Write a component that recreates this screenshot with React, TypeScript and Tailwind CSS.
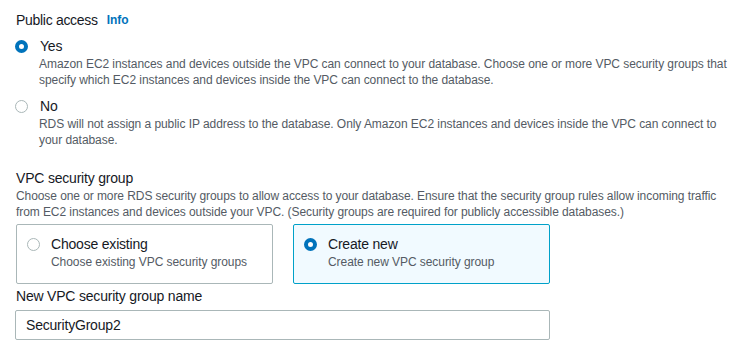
import type { ReactNode } from "react";

const font = { fontFamily: '"Liberation Sans", Arial, sans-serif' };

const Radio = ({ checked }: { checked?: boolean }) =>
    checked ? (
        <span className="box-border block size-[13px] shrink-0 rounded-full border-[4px] border-[#0073bb] bg-white" />
    ) : (
        <span className="box-border block size-[13px] shrink-0 rounded-full border border-[#aab7b8] bg-white" />
    );

interface OptionProps {
    checked?: boolean;
    label: string;
    children: ReactNode;
}

const RadioOption = ({ checked, label, children }: OptionProps) => (
    <div className="flex flex-col">
        <div className="-ml-px flex h-5 items-center gap-3">
            <Radio checked={checked} />
            <span className="text-[14px] leading-5 tracking-[-0.2px] text-[#16191f]">{label}</span>
        </div>
        <p className="pl-[23px] text-[12px] leading-4 tracking-[-0.06px] text-[#545b64]">{children}</p>
    </div>
);

const Tile = ({ checked, label, description }: { checked?: boolean; label: string; description: string }) => (
    <div
        className={
            checked
                ? "flex h-[60px] w-[257px] flex-col rounded-[2px] border border-[#00a1c9] bg-[#f1faff] pl-[10px] pt-[9px]"
                : "flex h-[60px] w-[257px] flex-col rounded-[2px] border border-[#aab7b8] bg-white pl-[10px] pt-[9px]"
        }
    >
        <div className="flex h-5 items-center gap-[11px]">
            <Radio checked={checked} />
            <span className="text-[14px] leading-5 tracking-[-0.2px] text-[#16191f]">{label}</span>
        </div>
        <p className="pl-6 text-[12px] leading-4 tracking-[-0.06px] text-[#545b64]">{description}</p>
    </div>
);

export default function App() {
    return (
        <div className="h-[346px] w-[740px] overflow-hidden bg-white pl-4 pt-[10px]" style={font}>
            <div className="flex h-5 items-center gap-[9px]">
                <span className="text-[14px] leading-5 tracking-[-0.3px] text-[#16191f]">Public access</span>
                <span className="text-[12px] font-bold leading-5 text-[#0073bb]">Info</span>
            </div>

            <div className="mt-[6px] flex flex-col gap-2">
                <RadioOption checked label="Yes">
                    Amazon EC2 instances and devices outside the VPC can connect to your database. Choose one or more VPC security groups that
                    <br />
                    specify which EC2 instances and devices inside the VPC can connect to the database.
                </RadioOption>
                <RadioOption label="No">
                    RDS will not assign a public IP address to the database. Only Amazon EC2 instances and devices inside the VPC can connect to
                    <br />
                    your database.
                </RadioOption>
            </div>

            <div className="mt-5 flex flex-col">
                <span className="text-[14px] leading-5 tracking-[-0.2px] text-[#16191f]">VPC security group</span>
                <p className="text-[12px] leading-4 tracking-[-0.08px] text-[#545b64]">
                    Choose one or more RDS security groups to allow access to your database. Ensure that the security group rules allow incoming traffic
                    <br />
                    from EC2 instances and devices outside your VPC. (Security groups are required for publicly accessible databases.)
                </p>
            </div>

            <div className="mt-1 flex gap-5">
                <Tile label="Choose existing" description="Choose existing VPC security groups" />
                <Tile checked label="Create new" description="Create new VPC security group" />
            </div>

            <div className="mt-[2px] text-[14px] leading-5 tracking-[-0.2px] text-[#16191f]">New VPC security group name</div>
            <div className="-ml-px mt-1 flex h-[30px] w-[535px] items-center rounded-[2px] border border-[#aab7b8] bg-white pl-[10px]">
                <span className="text-[14px] tracking-[-0.2px] text-[#16191f]">SecurityGroup2</span>
            </div>
        </div>
    );
}
